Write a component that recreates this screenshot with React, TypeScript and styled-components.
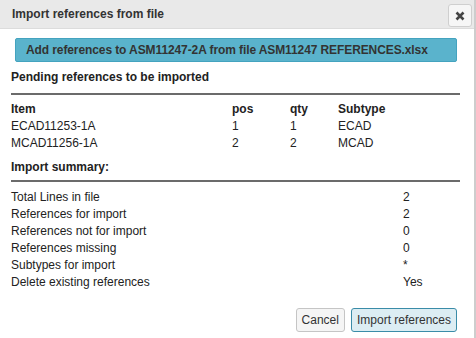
import { createGlobalStyle, styled } from 'styled-components';

const GlobalStyle = createGlobalStyle`
  html, body {
    margin: 0;
    padding: 0;
    background: #ffffff;
  }
  body {
    font-family: 'Liberation Sans', Arial, sans-serif;
    color: #222;
  }
`;

const Dialog = styled.div`
  width: 474px;
  height: 338px;
  border-right: 2px solid #cdcdcd;
  display: flex;
  flex-direction: column;
  background: #fff;
`;

const TitleBar = styled.div`
  height: 28px;
  background: #e9e9e9;
  border-bottom: 1px solid #dcdcdc;
  display: flex;
  align-items: center;
  justify-content: space-between;
  padding: 0 2px 0 12px;
`;

const Title = styled.span`
  font-size: 12px;
  font-weight: bold;
  color: #333;
`;

const CloseButton = styled.button`
  width: 24px;
  height: 23px;
  margin-top: 3px;
  padding: 0;
  border: 1px solid #cfcfcf;
  border-radius: 3px;
  background: #f6f6f6;
  display: flex;
  align-items: center;
  justify-content: center;
  color: #444;
`;

const Body = styled.div`
  padding: 9px 14px 0 11px;
  display: flex;
  flex-direction: column;
`;

const Banner = styled.div`
  margin: 0 3px 0 4px;
  height: 22px;
  background: #5ab3cc;
  border: 1px solid #44a3bf;
  border-radius: 2px;
  display: flex;
  align-items: center;
  padding-left: 10px;
  font-size: 12px;
  font-weight: bold;
  color: #333;
  white-space: nowrap;
  letter-spacing: -0.1px;
`;

const SectionTitle = styled.div<{ $top: number; $pad: number }>`
  margin-top: ${(p) => p.$top}px;
  font-size: 12px;
  font-weight: bold;
  color: #222;
  padding-bottom: ${(p) => p.$pad}px;
  border-bottom: 2px solid #6b6b6b;
`;

const Grid = styled.div<{ $cols: string; $top: number }>`
  display: grid;
  grid-template-columns: ${(p) => p.$cols};
  margin-top: ${(p) => p.$top}px;
  font-size: 12px;
  line-height: 17px;
  color: #222;
`;

const HeadCell = styled.div`
  font-weight: bold;
`;

const Cell = styled.div``;

const Footer = styled.div`
  display: flex;
  justify-content: flex-end;
  gap: 6px;
  padding: 17px 17px 0 0;
`;

const Button = styled.button<{ $primary?: boolean }>`
  height: 24px;
  padding: 0 5px;
  font-family: 'Liberation Sans', Arial, sans-serif;
  font-size: 12px;
  color: #333;
  border-radius: 3px;
  border: 1px solid ${(p) => (p.$primary ? '#3a8ca8' : '#c5c5c5')};
  background: ${(p) => (p.$primary ? '#dcedf3' : '#f5f5f5')};
`;

const pending = [
  { item: 'ECAD11253-1A', pos: '1', qty: '1', subtype: 'ECAD' },
  { item: 'MCAD11256-1A', pos: '2', qty: '2', subtype: 'MCAD' },
];

const summary = [
  ['Total Lines in file', '2'],
  ['References for import', '2'],
  ['References not for import', '0'],
  ['References missing', '0'],
  ['Subtypes for import', '*'],
  ['Delete existing references', 'Yes'],
];

export default function App() {
  return (
    <>
      <GlobalStyle />
      <Dialog>
        <TitleBar>
          <Title>Import references from file</Title>
          <CloseButton aria-label="close">
            <svg width="10" height="10" viewBox="0 0 10 10">
              <path d="M1.5 1.5 L8.5 8.5 M8.5 1.5 L1.5 8.5" stroke="#444" strokeWidth="2.6" strokeLinecap="butt" />
            </svg>
          </CloseButton>
        </TitleBar>
        <Body>
          <Banner>Add references to ASM11247-2A from file ASM11247 REFERENCES.xlsx</Banner>
          <SectionTitle $top={8} $pad={9}>Pending references to be imported</SectionTitle>
          <Grid $cols="221px 58px 48px 1fr" $top={6}>
            <HeadCell>Item</HeadCell>
            <HeadCell>pos</HeadCell>
            <HeadCell>qty</HeadCell>
            <HeadCell>Subtype</HeadCell>
            {pending.map((r) => (
              <>
                <Cell key={r.item}>{r.item}</Cell>
                <Cell>{r.pos}</Cell>
                <Cell>{r.qty}</Cell>
                <Cell>{r.subtype}</Cell>
              </>
            ))}
          </Grid>
          <SectionTitle $top={8} $pad={6}>Import summary:</SectionTitle>
          <Grid $cols="392px 1fr" $top={7}>
            {summary.map(([label, value]) => (
              <>
                <Cell key={label}>{label}</Cell>
                <Cell>{value}</Cell>
              </>
            ))}
          </Grid>
        </Body>
        <Footer>
          <Button>Cancel</Button>
          <Button $primary>Import references</Button>
        </Footer>
      </Dialog>
    </>
  );
}
